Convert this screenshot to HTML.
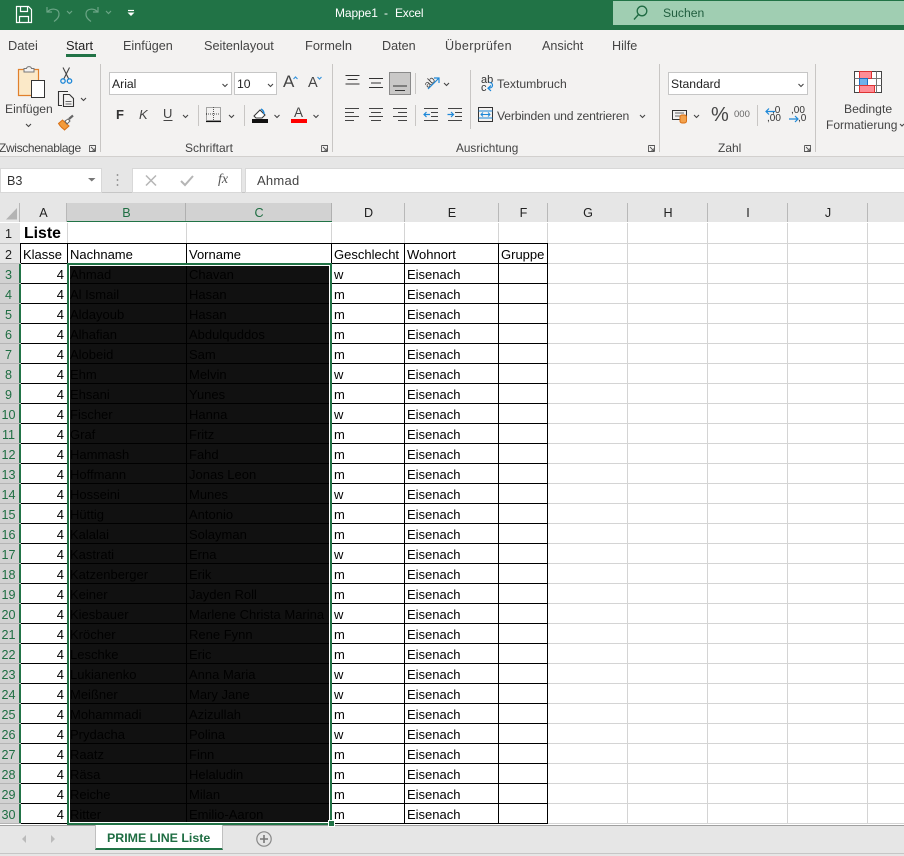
<!DOCTYPE html>
<html lang="de"><head><meta charset="utf-8"><title>Mappe1 - Excel</title>
<style>
html,body{margin:0;padding:0;background:#fff}
#app{position:relative;width:904px;height:856px;overflow:hidden;font-family:"Liberation Sans",sans-serif;font-size:13px;color:#000;background:#fff}
.abs,.t,.l{position:absolute}
.t{white-space:nowrap;color:#444;font-size:12.6px;line-height:16px}
.l{background:#c8c6c4;width:1px}
.box{position:absolute;background:#fff;border:1px solid #c6c6c6;box-sizing:border-box}
svg{position:absolute;overflow:visible}
.hd{position:absolute;top:203px;height:19px;background:#e6e6e6;text-align:center;font-size:12.6px;line-height:20px;color:#222;box-shadow:inset -1px 0 0 #b8b8b8}
.hd.s{background:#d2d2d2;color:#1f6e43;height:18px;border-bottom:2px solid #217346;box-shadow:inset -1px 0 0 #b0b0b0}
#grid{position:absolute;left:0;top:222px;width:904px;height:603px;overflow:hidden;background-color:#fff}
.r{position:relative;height:20px;width:904px}
.r>*{position:absolute;top:0;height:20px;box-sizing:border-box;font-style:normal;font-weight:normal;line-height:20px;padding-top:1px;padding-left:3px;white-space:nowrap;overflow:hidden;border-right:1px solid #000;border-bottom:1px solid #000}
.r>u{left:0;width:21px;background:#d2d2d2;color:#1f6e43;text-decoration:none;text-align:center;padding:1px 4px 0 0;border-right:none;border-bottom:1px solid #b4b4b4;font-size:12.6px;line-height:20px;box-shadow:inset -2px 0 0 #217346}
.r>.a{left:21px;width:47px;text-align:right;padding:1px 3px 0 0}
.r>.b{left:68px;width:119px;background:#111;color:#000;padding-left:2px}
.r>.c{left:187px;width:145px;background:#111;color:#000;padding-left:2px}
.r>.d{left:332px;width:73px;padding-left:2px}
.r>.e{left:405px;width:94px;padding-left:2px}
.r>.f{left:499px;width:49px}
.r>.g{left:548px;width:80px;border-color:#d4d4d4}
.r>.h{left:628px;width:80px;border-color:#d4d4d4}
.r>.i{left:708px;width:80px;border-color:#d4d4d4}
.r>.j{left:788px;width:80px;border-color:#d4d4d4}
.r>.k{left:868px;width:36px;border-color:#d4d4d4;border-right:none}
</style></head><body><div id="app">

<!-- title bar -->
<div class="abs" style="left:0;top:0;width:904px;height:30px;background:#217346"></div>
<div class="abs" style="left:613px;top:1px;width:291px;height:24px;background:#a0ceb2"></div>
<span class="t" style="left:335px;top:5px;color:#fff;font-size:12px;letter-spacing:-.1px">Mappe1</span>
<span class="t" style="left:384px;top:5px;color:#fff;font-size:12px">-</span>
<span class="t" style="left:395px;top:5px;color:#fff;font-size:12px;letter-spacing:-.2px">Excel</span>
<span class="t" style="left:663px;top:5px;color:#215e3f;font-size:12.2px">Suchen</span>
<svg style="left:0;top:0" width="904" height="30" fill="none">
<g stroke="#fff" stroke-width="1.2"><path d="M16.500 6.500h12l3 3v13h-15z"/><path d="M20.500 6.500v5h7v-5M19.500 22.500v-6h9v6"/></g>
<g stroke="#6ba586" stroke-width="1.2"><path d="M47 7v5h5M47.500 12c3-4 11-4 11.500 1.500c.3 3-2 6-5 8"/><path d="M67 11l2.500 2.500L72 11"/><path d="M98 7v5h-5M97.500 12c-3-4-11-4-11.500 1.500c-.3 3 2 6 5 8"/><path d="M106 11l2.500 2.500L111 11"/></g>
<path d="M128 10.500h6" stroke="#fff" stroke-width="1.200"/><path d="M127.500 12.500h7l-3.500 3.500z" fill="#fff"/>
<circle cx="642" cy="11" r="4.800" stroke="#1f6b43" stroke-width="1.300"/><path d="M638.500 14.500l-4.500 5" stroke="#1f6b43" stroke-width="1.400"/>
</svg>

<!-- ribbon -->
<div class="abs" style="left:0;top:30px;width:904px;height:126px;background:#f3f2f1"></div>
<div class="abs" style="left:0;top:156px;width:904px;height:47px;background:#e6e6e6;border-top:1px solid #d2d0ce;box-sizing:border-box"></div>
<div class="abs" style="left:0;top:192px;width:904px;height:1px;background:#c6c6c6"></div>
<span class="t" style="left:8px;top:38px;font-size:12.8px">Datei</span>
<span class="t" style="left:66px;top:38px;color:#222;font-size:12.8px">Start</span>
<div class="abs" style="left:66px;top:54px;width:30px;height:3px;background:#217346"></div>
<span class="t" style="left:123px;top:38px">Einfügen</span>
<span class="t" style="left:204px;top:38px;font-size:12.7px">Seitenlayout</span>
<span class="t" style="left:305px;top:38px;font-size:12.8px">Formeln</span>
<span class="t" style="left:382px;top:38px">Daten</span>
<span class="t" style="left:445px;top:38px;letter-spacing:.4px">Überprüfen</span>
<span class="t" style="left:542px;top:38px">Ansicht</span>
<span class="t" style="left:612px;top:38px">Hilfe</span>

<div class="l" style="left:100px;top:64px;height:88px"></div>
<div class="l" style="left:332px;top:64px;height:88px"></div>
<div class="l" style="left:659px;top:64px;height:88px"></div>
<div class="l" style="left:815px;top:64px;height:88px"></div>
<div class="l" style="left:198px;top:105px;height:21px"></div>
<div class="l" style="left:244px;top:105px;height:21px"></div>
<div class="l" style="left:415px;top:73px;height:21px"></div>
<div class="l" style="left:415px;top:105px;height:21px"></div>
<div class="l" style="left:470px;top:70px;height:59px"></div>
<div class="l" style="left:757px;top:105px;height:21px"></div>

<span class="t" style="left:-1px;top:140px;font-size:12px;letter-spacing:-.35px">Zwischenablage</span>
<span class="t" style="left:185px;top:140px;font-size:12px">Schriftart</span>
<span class="t" style="left:456px;top:140px;font-size:11.8px">Ausrichtung</span>
<span class="t" style="left:718px;top:140px;font-size:12px">Zahl</span>
<span class="t" style="left:5px;top:101px;font-size:12.1px">Einfügen</span>
<span class="t" style="left:497px;top:76px;font-size:12.2px">Textumbruch</span>
<span class="t" style="left:497px;top:108px;font-size:12.2px;letter-spacing:-.17px">Verbinden und zentrieren</span>
<span class="t" style="left:844px;top:101px;font-size:12.2px">Bedingte</span>
<span class="t" style="left:826px;top:117px;font-size:12px">Formatierung</span>

<div class="box" style="left:109px;top:72px;width:123px;height:23px"></div>
<div class="box" style="left:234px;top:72px;width:43px;height:23px"></div>
<div class="box" style="left:668px;top:72px;width:140px;height:23px"></div>
<span class="t" style="left:112px;top:76px;font-size:12.2px;color:#222">Arial</span>
<span class="t" style="left:237px;top:76px;font-size:12.2px;color:#222">10</span>
<span class="t" style="left:671px;top:76px;font-size:12.2px;color:#222">Standard</span>
<span class="t" style="left:116px;top:107px;font-weight:bold;color:#333;font-size:13px">F</span>
<span class="t" style="left:139px;top:107px;font-style:italic;color:#444;font-size:13px">K</span>
<span class="t" style="left:163px;top:106px;color:#444;font-size:13px">U</span>
<span class="t" style="left:283px;top:74px;font-size:17px;color:#444">A</span>
<span class="t" style="left:308px;top:75px;font-size:14.5px;color:#444">A</span>
<span class="t" style="left:294px;top:105px;font-size:13.5px;color:#444">A</span>
<span class="t" style="left:711px;top:107px;font-size:20px;line-height:16px;color:#444">%</span>
<span class="t" style="left:734px;top:107px;font-size:9.5px;color:#666">000</span>
<span class="t" style="left:772px;top:106px;font-size:10px;line-height:10px;color:#333">,0</span>
<span class="t" style="left:767px;top:114px;font-size:10px;line-height:10px;color:#333">,00</span>
<span class="t" style="left:791px;top:106px;font-size:10px;line-height:10px;color:#333">,00</span>
<span class="t" style="left:798px;top:114px;font-size:10px;line-height:10px;color:#333">,0</span>
<span class="t" style="left:481px;top:75px;font-size:11px;line-height:10px;color:#333">ab</span>
<span class="t" style="left:481px;top:83px;font-size:11px;line-height:10px;color:#333">c</span>

<svg style="left:0;top:0" width="904" height="160" fill="none">
<!-- clipboard -->
<path d="M18.500 69.500h20v26h-20z" fill="#fbe9c8" stroke="#e0802c" stroke-width="1.200"/>
<path d="M24 70v-1.500h2.500c.5-2.500 4.500-2.500 5 0H34V72H24z" fill="#f3f2f1" stroke="#777"/>
<path d="M31.500 80.500h13v17h-13z" fill="#fff" stroke="#333"/>
<path d="M26 124l2.500 2.500 2.500-2.500M81 98l2.500 2.500L86 98M222.500 84l2.500 2.500 2.500-2.500M268 84l2.500 2.500L273 84M798.500 84l2.500 2.500 2.500-2.500M444 83l2.500 2.500L449 83M640 115l2.500 2.500L645 115M183 115l2.500 2.500L188 115M229 115l2.500 2.500L234 115M274.500 115l2.500 2.500 2.500-2.500M313.500 115l2.500 2.500 2.500-2.500M694 115l2.500 2.500L699 115" stroke="#444" stroke-width="1.100"/>
<!-- scissors -->
<path d="M63 67.500l6 12M69.500 67.500l-6 12" stroke="#444" stroke-width="1.100"/>
<circle cx="63" cy="81" r="2.200" stroke="#1e88d8" stroke-width="1.300"/><circle cx="69.500" cy="81" r="2.200" stroke="#1e88d8" stroke-width="1.300"/>
<!-- copy -->
<path d="M62 105.500h-3.500v-14h9.500" stroke="#333" stroke-width="1.100"/>
<path d="M63.500 94.500h6l4 4v8h-10z" stroke="#333" stroke-width="1.100"/><path d="M65.500 101.500h6M65.500 104h6" stroke="#666"/>
<!-- painter -->
<path d="M58.500 123.500l4-3.500 6.500 6-4.500 4c-1.500-2-3-1.500-6-6.500z" fill="#f39b3c" stroke="#d86f14"/><path d="M65 121l3-2 2 2-3 3z" fill="#fff" stroke="#666"/><path d="M69 119l4-3.500" stroke="#666" stroke-width="2.200"/>
<!-- font grow arrows -->
<path d="M293.500 79l2-2 2 2M317.500 77l2 2 2-2" stroke="#3a96dd" stroke-width="1.200"/>
<path d="M163.500 120.500h9" stroke="#444"/>
<!-- borders -->
<path d="M206.500 107.500h14v13h-14z" stroke="#555" stroke-dasharray="1 1"/><path d="M213.500 107v14M206 114h15" stroke="#555" stroke-dasharray="1 1"/><path d="M206 121.500h15" stroke="#111" stroke-width="1.200"/>
<!-- fill -->
<path d="M254 116l6-6 5 5-3 3h-6z" stroke="#333" fill="#fff"/><path d="M261 109c2 1 3 3 3 5" stroke="#1e88d8" stroke-width="1.500"/>
<rect x="252" y="119" width="16" height="4" fill="#111"/>
<rect x="291" y="119" width="16" height="4" fill="#f00"/>
<!-- align -->
<path d="M345.500 75.500h14M347.500 79.500h10M345.500 84h14M369 78.500h14M371 83h10M369 87.500h14" stroke="#333" stroke-width="1.100"/>
<rect x="389.500" y="72.500" width="21" height="22" fill="#c9c8c7" stroke="#8a8a8a"/>
<path d="M393 86h14M395 90.500h10" stroke="#333" stroke-width="1.100"/>
<path d="M345 108.500h14M345 112.500h9M345 116.500h14M345 120.500h9M369 108.500h14M371 112.500h10M369 116.500h14M371 120.500h10M393 108.500h14M398 112.500h9M393 116.500h14M398 120.500h9" stroke="#444" stroke-width="1"/>
<path d="M424 108.500h14M431 112.500h7M431 116.500h7M424 120.500h14M448 108.500h14M455 112.500h7M455 116.500h7M448 120.500h14" stroke="#444" stroke-width="1"/>
<path d="M430 114.500h-6m2.500-2.500l-2.500 2.500 2.500 2.500M447.500 114.500h6m-2.500-2.500l2.500 2.500-2.500 2.500" stroke="#1e88d8" stroke-width="1.200"/>
<!-- orientation -->
<text x="424" y="85" font-family="Liberation Sans" font-size="10" fill="#444" transform="rotate(-45 430 82)">ab</text>
<path d="M428 89l11-11m-5 0h5v5" stroke="#1e88d8" stroke-width="1.200"/>
<!-- wrap -->
<path d="M488 88h1.500c4 0 4-5.500 0-5.500" stroke="#1e88d8" stroke-width="1.200"/><path d="M491 85.500l-3 2.700 3 2.700" stroke="#1e88d8" stroke-width="1.200"/>
<!-- merge -->
<path d="M478.500 107.500h14v14h-14z" stroke="#333"/><path d="M478.500 111h14M478.500 118h14" stroke="#1e88d8"/><path d="M481 114.500h9m-7-2l-2 2 2 2m5-4l2 2-2 2" stroke="#1e88d8"/>
<!-- currency -->
<path d="M672.500 110.500h14v9h-14z" stroke="#333"/><path d="M675 113h9M675 116h5" stroke="#666"/><rect x="680" y="115" width="6.500" height="8" rx="2" fill="#f3a24c" stroke="#d86f14"/>
<!-- decimals -->
<path d="M775 111.500h-9m3-3l-3 3 3 3M789 119h9m-3-3l3 3-3 3" stroke="#1e88d8" stroke-width="1.200"/>
<!-- launchers -->
<path d="M89.500 145.500h6v6M89.500 145.500v6h6M91 147l4 4M92 151h3v-3" stroke="#555" stroke-width=".9"/>
<path d="M321.500 145.500h6v6M321.500 145.500v6h6M323 147l4 4M324 151h3v-3" stroke="#555" stroke-width=".9"/>
<path d="M648.500 145.500h6v6M648.500 145.500v6h6M650 147l4 4M651 151h3v-3" stroke="#555" stroke-width=".9"/>
<path d="M804.500 145.500h6v6M804.500 145.500v6h6M806 147l4 4M807 151h3v-3" stroke="#555" stroke-width=".9"/>
<!-- conditional -->
<g transform="translate(854.500 71.500)">
<rect x="0" y="0" width="27" height="21" fill="#fff" stroke="#444"/>
<path d="M22 0v21M0 7h5M17 7h10M0 14h5M20 14h7" stroke="#777"/>
<path d="M17 0v7" stroke="#777"/>
<rect x="5" y="0" width="12" height="7" fill="#ff8d96" stroke="#d33"/>
<rect x="5" y="7" width="8" height="7" fill="#6fb1ea" stroke="#1e6fc0"/>
<rect x="5" y="14" width="15" height="7" fill="#ff8d96" stroke="#d33"/>
</g>
<path d="M900 124l2 2 2-2" stroke="#444"/>
</svg>

<!-- formula bar -->
<div class="box" style="left:0;top:168px;width:102px;height:25px;border-color:#d8d8d8"></div>
<div class="box" style="left:132px;top:168px;width:110px;height:25px;border-color:#d8d8d8"></div>
<div class="box" style="left:245px;top:168px;width:660px;height:25px;border-color:#d8d8d8"></div>
<span class="t" style="left:7px;top:173px;font-size:12.6px;color:#333">B3</span>
<span class="t" style="left:257px;top:173px;font-size:13px;color:#444;letter-spacing:.25px">Ahmad</span>
<span class="t" style="left:218px;top:172px;font-family:'Liberation Serif',serif;font-style:italic;font-size:14px;color:#555">fx</span>
<svg style="left:0;top:0" width="904" height="225" fill="none">
<path d="M88 178h7.500l-3.750 3.500z" fill="#777"/>
<path d="M117.500 174v2M117.500 179v2M117.500 184v2" stroke="#999" stroke-width="1.500"/>
<path d="M146 175.500l10 10M156 175.500l-10 10" stroke="#b5b5b5" stroke-width="1.500"/>
<path d="M181 181l4 4 8-9" stroke="#b5b5b5" stroke-width="2"/>
</svg>

<!-- column headers -->
<div class="hd" style="left:0;width:20px"></div>
<svg style="left:0;top:203px" width="20" height="19"><path d="M6 16.500L17 5v11.500z" fill="#b4b4b4"/></svg>
<div class="hd" style="left:20px;width:47px">A</div>
<div class="hd s" style="left:67px;width:119px">B</div>
<div class="hd s" style="left:186px;width:146px">C</div>
<div class="hd" style="left:332px;width:73px">D</div>
<div class="hd" style="left:405px;width:94px">E</div>
<div class="hd" style="left:499px;width:49px">F</div>
<div class="hd" style="left:548px;width:80px">G</div>
<div class="hd" style="left:628px;width:80px">H</div>
<div class="hd" style="left:708px;width:80px">I</div>
<div class="hd" style="left:788px;width:80px">J</div>
<div class="hd" style="left:868px;width:36px;box-shadow:none"></div>
<div class="abs" style="left:0;top:222px;width:67px;height:1px;background:#a0a0a0"></div>
<div class="abs" style="left:332px;top:222px;width:572px;height:1px;background:#a0a0a0"></div>

<!-- grid -->
<div id="grid">
<div class="abs" style="left:0;top:1px;width:20px;height:21px;background:#e6e6e6;border-bottom:1px solid #c0c0c0;box-sizing:border-box;text-align:center;font-size:12.6px;line-height:22px;color:#222;padding-right:3px">1</div>
<div class="abs" style="left:20px;top:1px;width:528px;height:21px;box-sizing:border-box;border-bottom:1px solid #000;background:linear-gradient(#d4d4d4,#d4d4d4) 47px 0/1px 100% no-repeat,linear-gradient(#d4d4d4,#d4d4d4) 166px 0/1px 100% no-repeat,linear-gradient(#d4d4d4,#d4d4d4) 311px 0/1px 100% no-repeat,linear-gradient(#d4d4d4,#d4d4d4) 384px 0/1px 100% no-repeat,linear-gradient(#d4d4d4,#d4d4d4) 478px 0/1px 100% no-repeat,linear-gradient(#d4d4d4,#d4d4d4) 527px 0/1px 100% no-repeat"><b style="position:absolute;left:4px;top:0;font-size:15.8px;line-height:21px">Liste</b></div>
<div class="abs" style="left:548px;top:1px;width:356px;height:21px;box-sizing:border-box;background:#fff;border-bottom:1px solid #d4d4d4;background-image:linear-gradient(#d4d4d4,#d4d4d4),linear-gradient(#d4d4d4,#d4d4d4),linear-gradient(#d4d4d4,#d4d4d4),linear-gradient(#d4d4d4,#d4d4d4);background-size:1px 100%;background-repeat:no-repeat;background-position:79px 0,159px 0,239px 0,319px 0"></div>
<div style="height:22px"></div>
<div class="r" style="height:20px"><u style="background:#e6e6e6;color:#222;box-shadow:inset -1px 0 0 #000;border-bottom-color:#c0c0c0">2</u><i class="a" style="padding:1px 0 0 2px;text-align:left">Klasse</i><i class="b" style="background:#fff">Nachname</i><i class="c" style="background:#fff">Vorname</i><i class="d">Geschlecht</i><i class="e">Wohnort</i><i class="f" style="padding-left:2px">Gruppe</i><i class="g"></i><i class="h"></i><i class="i"></i><i class="j"></i><i class="k"></i></div>
<div class="r"><u>3</u><i class="a">4</i><i class="b">Ahmad</i><i class="c">Chavan</i><i class="d">w</i><i class="e">Eisenach</i><i class="f"></i><i class="g"></i><i class="h"></i><i class="i"></i><i class="j"></i><i class="k"></i></div>
<div class="r"><u>4</u><i class="a">4</i><i class="b">Al Ismail</i><i class="c">Hasan</i><i class="d">m</i><i class="e">Eisenach</i><i class="f"></i><i class="g"></i><i class="h"></i><i class="i"></i><i class="j"></i><i class="k"></i></div>
<div class="r"><u>5</u><i class="a">4</i><i class="b">Aldayoub</i><i class="c">Hasan</i><i class="d">m</i><i class="e">Eisenach</i><i class="f"></i><i class="g"></i><i class="h"></i><i class="i"></i><i class="j"></i><i class="k"></i></div>
<div class="r"><u>6</u><i class="a">4</i><i class="b">Alhafian</i><i class="c">Abdulquddos</i><i class="d">m</i><i class="e">Eisenach</i><i class="f"></i><i class="g"></i><i class="h"></i><i class="i"></i><i class="j"></i><i class="k"></i></div>
<div class="r"><u>7</u><i class="a">4</i><i class="b">Alobeid</i><i class="c">Sam</i><i class="d">m</i><i class="e">Eisenach</i><i class="f"></i><i class="g"></i><i class="h"></i><i class="i"></i><i class="j"></i><i class="k"></i></div>
<div class="r"><u>8</u><i class="a">4</i><i class="b">Ehm</i><i class="c">Melvin</i><i class="d">w</i><i class="e">Eisenach</i><i class="f"></i><i class="g"></i><i class="h"></i><i class="i"></i><i class="j"></i><i class="k"></i></div>
<div class="r"><u>9</u><i class="a">4</i><i class="b">Ehsani</i><i class="c">Yunes</i><i class="d">m</i><i class="e">Eisenach</i><i class="f"></i><i class="g"></i><i class="h"></i><i class="i"></i><i class="j"></i><i class="k"></i></div>
<div class="r"><u>10</u><i class="a">4</i><i class="b">Fischer</i><i class="c">Hanna</i><i class="d">w</i><i class="e">Eisenach</i><i class="f"></i><i class="g"></i><i class="h"></i><i class="i"></i><i class="j"></i><i class="k"></i></div>
<div class="r"><u>11</u><i class="a">4</i><i class="b">Graf</i><i class="c">Fritz</i><i class="d">m</i><i class="e">Eisenach</i><i class="f"></i><i class="g"></i><i class="h"></i><i class="i"></i><i class="j"></i><i class="k"></i></div>
<div class="r"><u>12</u><i class="a">4</i><i class="b">Hammash</i><i class="c">Fahd</i><i class="d">m</i><i class="e">Eisenach</i><i class="f"></i><i class="g"></i><i class="h"></i><i class="i"></i><i class="j"></i><i class="k"></i></div>
<div class="r"><u>13</u><i class="a">4</i><i class="b">Hoffmann</i><i class="c">Jonas Leon</i><i class="d">m</i><i class="e">Eisenach</i><i class="f"></i><i class="g"></i><i class="h"></i><i class="i"></i><i class="j"></i><i class="k"></i></div>
<div class="r"><u>14</u><i class="a">4</i><i class="b">Hosseini</i><i class="c">Munes</i><i class="d">w</i><i class="e">Eisenach</i><i class="f"></i><i class="g"></i><i class="h"></i><i class="i"></i><i class="j"></i><i class="k"></i></div>
<div class="r"><u>15</u><i class="a">4</i><i class="b">Hüttig</i><i class="c">Antonio</i><i class="d">m</i><i class="e">Eisenach</i><i class="f"></i><i class="g"></i><i class="h"></i><i class="i"></i><i class="j"></i><i class="k"></i></div>
<div class="r"><u>16</u><i class="a">4</i><i class="b">Kalalai</i><i class="c">Solayman</i><i class="d">m</i><i class="e">Eisenach</i><i class="f"></i><i class="g"></i><i class="h"></i><i class="i"></i><i class="j"></i><i class="k"></i></div>
<div class="r"><u>17</u><i class="a">4</i><i class="b">Kastrati</i><i class="c">Erna</i><i class="d">w</i><i class="e">Eisenach</i><i class="f"></i><i class="g"></i><i class="h"></i><i class="i"></i><i class="j"></i><i class="k"></i></div>
<div class="r"><u>18</u><i class="a">4</i><i class="b">Katzenberger</i><i class="c">Erik</i><i class="d">m</i><i class="e">Eisenach</i><i class="f"></i><i class="g"></i><i class="h"></i><i class="i"></i><i class="j"></i><i class="k"></i></div>
<div class="r"><u>19</u><i class="a">4</i><i class="b">Keiner</i><i class="c">Jayden Roll</i><i class="d">m</i><i class="e">Eisenach</i><i class="f"></i><i class="g"></i><i class="h"></i><i class="i"></i><i class="j"></i><i class="k"></i></div>
<div class="r"><u>20</u><i class="a">4</i><i class="b">Kiesbauer</i><i class="c">Marlene Christa Marina</i><i class="d">w</i><i class="e">Eisenach</i><i class="f"></i><i class="g"></i><i class="h"></i><i class="i"></i><i class="j"></i><i class="k"></i></div>
<div class="r"><u>21</u><i class="a">4</i><i class="b">Kröcher</i><i class="c">Rene Fynn</i><i class="d">m</i><i class="e">Eisenach</i><i class="f"></i><i class="g"></i><i class="h"></i><i class="i"></i><i class="j"></i><i class="k"></i></div>
<div class="r"><u>22</u><i class="a">4</i><i class="b">Leschke</i><i class="c">Eric</i><i class="d">m</i><i class="e">Eisenach</i><i class="f"></i><i class="g"></i><i class="h"></i><i class="i"></i><i class="j"></i><i class="k"></i></div>
<div class="r"><u>23</u><i class="a">4</i><i class="b">Lukianenko</i><i class="c">Anna Maria</i><i class="d">w</i><i class="e">Eisenach</i><i class="f"></i><i class="g"></i><i class="h"></i><i class="i"></i><i class="j"></i><i class="k"></i></div>
<div class="r"><u>24</u><i class="a">4</i><i class="b">Meißner</i><i class="c">Mary Jane</i><i class="d">w</i><i class="e">Eisenach</i><i class="f"></i><i class="g"></i><i class="h"></i><i class="i"></i><i class="j"></i><i class="k"></i></div>
<div class="r"><u>25</u><i class="a">4</i><i class="b">Mohammadi</i><i class="c">Azizullah</i><i class="d">m</i><i class="e">Eisenach</i><i class="f"></i><i class="g"></i><i class="h"></i><i class="i"></i><i class="j"></i><i class="k"></i></div>
<div class="r"><u>26</u><i class="a">4</i><i class="b">Prydacha</i><i class="c">Polina</i><i class="d">w</i><i class="e">Eisenach</i><i class="f"></i><i class="g"></i><i class="h"></i><i class="i"></i><i class="j"></i><i class="k"></i></div>
<div class="r"><u>27</u><i class="a">4</i><i class="b">Raatz</i><i class="c">Finn</i><i class="d">m</i><i class="e">Eisenach</i><i class="f"></i><i class="g"></i><i class="h"></i><i class="i"></i><i class="j"></i><i class="k"></i></div>
<div class="r"><u>28</u><i class="a">4</i><i class="b">Räsa</i><i class="c">Helaludin</i><i class="d">m</i><i class="e">Eisenach</i><i class="f"></i><i class="g"></i><i class="h"></i><i class="i"></i><i class="j"></i><i class="k"></i></div>
<div class="r"><u>29</u><i class="a">4</i><i class="b">Reiche</i><i class="c">Milan</i><i class="d">m</i><i class="e">Eisenach</i><i class="f"></i><i class="g"></i><i class="h"></i><i class="i"></i><i class="j"></i><i class="k"></i></div>
<div class="r"><u>30</u><i class="a">4</i><i class="b">Ritter</i><i class="c">Emilio-Aaron</i><i class="d">m</i><i class="e">Eisenach</i><i class="f"></i><i class="g"></i><i class="h"></i><i class="i"></i><i class="j"></i><i class="k"></i></div>
</div>

<!-- tab bar -->
<div class="abs" style="left:0;top:825px;width:904px;height:31px;background:#e6e6e6;border-top:1px solid #a0a0a0;box-sizing:border-box"></div>
<div class="abs" style="left:0;top:853px;width:904px;height:1px;background:#c6c6c6"></div>
<div class="abs" style="left:95px;top:825px;width:128px;height:25px;background:#fff;border-left:1px solid #c0c0c0;border-right:1px solid #c0c0c0;border-bottom:2px solid #217346;box-sizing:border-box"></div>
<span class="t" style="left:107px;top:830px;font-weight:bold;font-size:12.4px;color:#1f6e43">PRIME LINE Liste</span>
<svg style="left:0;top:824px" width="300" height="32" fill="none">
<path d="M26 11l-4 4 4 4z" fill="#bbb"/><path d="M51 11l4 4-4 4z" fill="#bbb"/>
<circle cx="264" cy="15" r="7.200" stroke="#888" stroke-width="1.200"/><path d="M260 15h8M264 11v8" stroke="#777" stroke-width="1.600"/>
</svg>

<!-- selection -->
<div class="abs" style="left:67px;top:263px;width:265px;height:562px;box-sizing:border-box;border:2px solid #217346"></div>
<div class="abs" style="left:69px;top:265px;width:261px;height:558px;box-sizing:border-box;border:1px solid #fff"></div>
<div class="abs" style="left:328px;top:820px;width:5px;height:5px;background:#217346;border:1px solid #fff;box-sizing:content-box"></div>
</div></body></html>
